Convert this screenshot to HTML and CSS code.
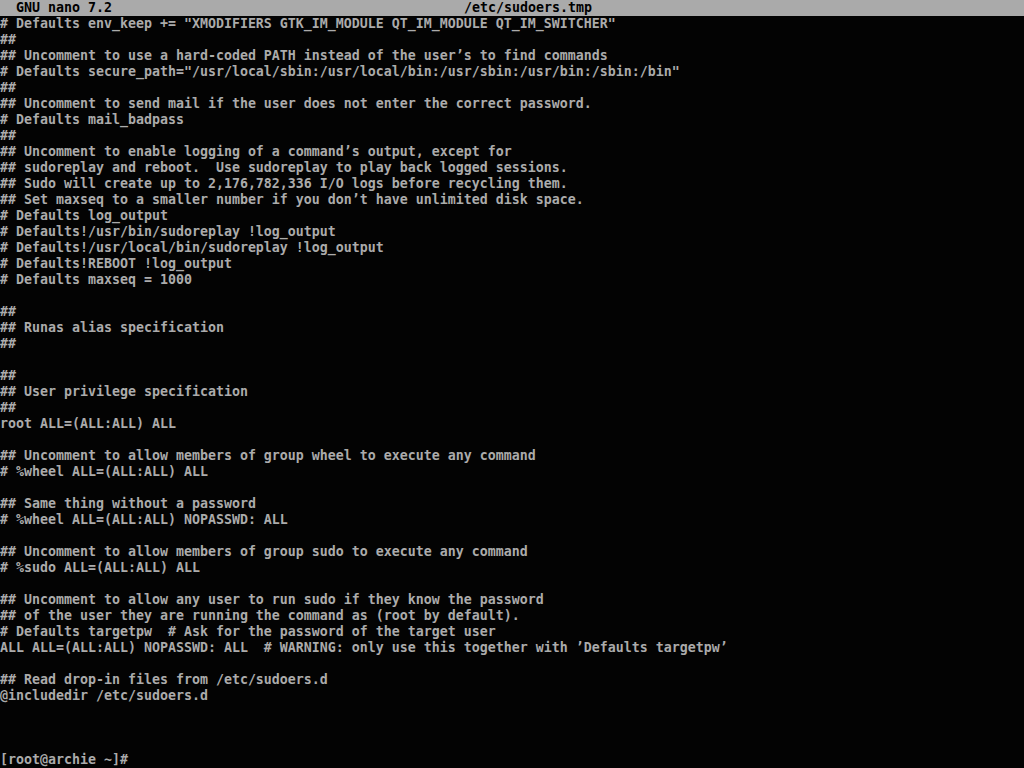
FILE: index.html
```html
<!DOCTYPE html>
<html>
<head>
<meta charset="utf-8">
<link rel="stylesheet" href="styles.css">
</head>
<body>
<div class="screen">
<div class="titlebar"><span class="app">  GNU nano 7.2</span><span class="file">/etc/sudoers.tmp</span></div>
<pre class="buffer"># Defaults env_keep += "XMODIFIERS GTK_IM_MODULE QT_IM_MODULE QT_IM_SWITCHER"
##
## Uncomment to use a hard-coded PATH instead of the user’s to find commands
# Defaults secure_path="/usr/local/sbin:/usr/local/bin:/usr/sbin:/usr/bin:/sbin:/bin"
##
## Uncomment to send mail if the user does not enter the correct password.
# Defaults mail_badpass
##
## Uncomment to enable logging of a command’s output, except for
## sudoreplay and reboot.  Use sudoreplay to play back logged sessions.
## Sudo will create up to 2,176,782,336 I/O logs before recycling them.
## Set maxseq to a smaller number if you don’t have unlimited disk space.
# Defaults log_output
# Defaults!/usr/bin/sudoreplay !log_output
# Defaults!/usr/local/bin/sudoreplay !log_output
# Defaults!REBOOT !log_output
# Defaults maxseq = 1000

##
## Runas alias specification
##

##
## User privilege specification
##
root ALL=(ALL:ALL) ALL

## Uncomment to allow members of group wheel to execute any command
# %wheel ALL=(ALL:ALL) ALL

## Same thing without a password
# %wheel ALL=(ALL:ALL) NOPASSWD: ALL

## Uncomment to allow members of group sudo to execute any command
# %sudo ALL=(ALL:ALL) ALL

## Uncomment to allow any user to run sudo if they know the password
## of the user they are running the command as (root by default).
# Defaults targetpw  # Ask for the password of the target user
ALL ALL=(ALL:ALL) NOPASSWD: ALL  # WARNING: only use this together with ’Defaults targetpw’

## Read drop-in files from /etc/sudoers.d
@includedir /etc/sudoers.d



[root@archie ~]#</pre>
</div>
</body>
</html>
```
FILE: styles.css
```css
html, body {
  margin: 0;
  padding: 0;
  background: #000;
}
.screen {
  width: 1024px;
  height: 768px;
  overflow: hidden;
  background: #030303;
  color: #ababab;
  font-family: "DejaVu Sans Mono", "Liberation Mono", monospace;
  font-size: 13.29px;
  font-weight: bold;
  line-height: 16px;
  display: flex;
  flex-direction: column;
}
.titlebar {
  height: 16px;
  background: #aaaaaa;
  color: #000;
  white-space: pre;
  display: flex;
}
.app {
  width: 464px;
}
.buffer {
  margin: 0;
  font: inherit;
  line-height: 16px;
  white-space: pre;
}
```
